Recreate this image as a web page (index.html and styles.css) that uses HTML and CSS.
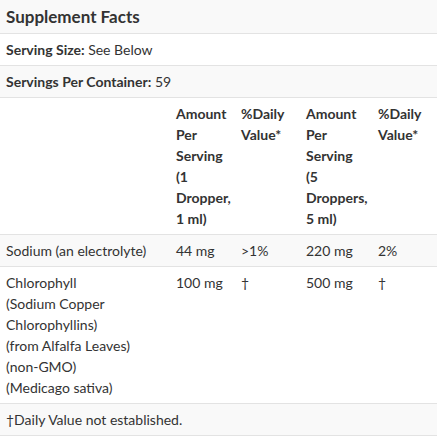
FILE: index.html
```html
<!DOCTYPE html>
<html>
<head>
<meta charset="utf-8">
<link rel="stylesheet" href="styles.css">
</head>
<body>
<table class="facts">
  <colgroup>
    <col class="c1"><col class="c2"><col class="c3"><col class="c4"><col class="c5">
  </colgroup>
  <tbody>
    <tr class="title-row"><td colspan="5" class="title">Supplement Facts</td></tr>
    <tr><td colspan="5"><b>Serving Size:</b> See Below</td></tr>
    <tr><td colspan="5"><b>Servings Per Container:</b> 59</td></tr>
    <tr class="head">
      <td></td>
      <td><b>Amount Per Serving (1 Dropper, 1&nbsp;ml)</b></td>
      <td><b>%Daily Value*</b></td>
      <td><b>Amount Per Serving (5 Droppers, 5&nbsp;ml)</b></td>
      <td><b>%Daily Value*</b></td>
    </tr>
    <tr>
      <td>Sodium (an electrolyte)</td>
      <td>44 mg</td>
      <td>&gt;1%</td>
      <td>220 mg</td>
      <td>2%</td>
    </tr>
    <tr>
      <td>Chlorophyll<br>(Sodium Copper<br>Chlorophyllins)<br>(from Alfalfa Leaves)<br>(non-GMO)<br>(Medicago sativa)</td>
      <td>100 mg</td>
      <td>†</td>
      <td>500 mg</td>
      <td>†</td>
    </tr>
    <tr><td colspan="5">†Daily Value not established.</td></tr>
  </tbody>
</table>
</body>
</html>
```
FILE: styles.css
```css
html, body {
  margin: 0;
  padding: 0;
  background: #fff;
}
body {
  font-family: Lato, "Open Sans", sans-serif;
  font-size: 14px;
  color: #333;
}
.facts {
  width: 437px;
  border-collapse: collapse;
  table-layout: fixed;
}
.c1 { width: 170px; }
.c2 { width: 65px; }
.c3 { width: 65px; }
.c4 { width: 72px; }
.c5 { width: 65px; }
.facts td {
  padding: 5px 6px;
  line-height: 21px;
  vertical-align: top;
  border-bottom: 1px solid #e3e3e3;
}
.facts tr:nth-child(odd) td {
  background: #f9f9f9;
}
.facts b {
  font-weight: 700;
  color: #333;
}
.facts td.title {
  font-size: 17px;
  font-weight: 700;
  line-height: 23px;
  color: #333;
}
```
